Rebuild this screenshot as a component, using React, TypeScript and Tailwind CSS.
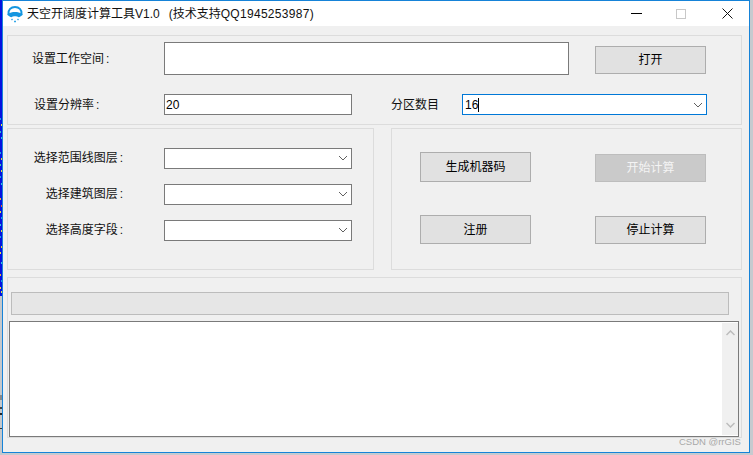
const font = "font-['Liberation_Sans','Noto_Sans_CJK_SC',sans-serif]";

// noisy screenshot edge of whatever sat behind the window
const noise = [
  [0, 118, "#19a0e8"], [1, 124, "#e8e040"], [0, 131, "#2bb8c8"], [1, 137, "#30c0e0"], [0, 152, "#19a0e8"],
  [1, 158, "#e8d030"], [0, 164, "#40c8a0"], [1, 170, "#e8e040"], [0, 176, "#19a0e8"], [1, 183, "#30c0e0"],
  [0, 198, "#e8b030"], [1, 205, "#e86030"], [0, 211, "#e8e040"], [1, 217, "#19a0e8"], [0, 224, "#30c0e0"],
  [1, 230, "#e8e040"], [0, 236, "#19a0e8"], [1, 246, "#e8c030"], [0, 252, "#e8e040"], [1, 262, "#30c0e0"],
  [0, 274, "#e8b030"], [1, 280, "#19a0e8"], [0, 287, "#e8e040"], [1, 291, "#e8e040"],
] as const;

function DesktopEdge() {
  return (
    <svg width="2" height="455" className="shrink-0">
      <rect width="2" height="296" fill="#0410e0" />
      <rect y="296" width="2" height="159" fill="#c4c8cc" />
      {noise.map(([x, y, c]) => (
        <rect key={y} x={x} y={y} width="1" height="2" fill={c} />
      ))}
      <rect y="395" width="2" height="5" fill="#8a8a8a" />
      <rect y="407" width="2" height="2" fill="#444" />
      <rect y="413" width="2" height="2" fill="#222" />
      <rect y="428" width="2" height="1" fill="#333" />
    </svg>
  );
}

function Logo() {
  return (
    <svg width="18" height="18" viewBox="0 0 18 18" fill="none" className="shrink-0">
      <path d="M2.500 9C2 4.800 5 2 9 2s7 2.800 6.500 7" stroke="#1496e0" strokeWidth="2" />
      <path d="M1 9.500C4 7.600 6.500 7 9 7s5 .6 8 2.500c-1.500 1.500-3 2.500-4.500 2.800C11 11 7 11 5.500 12.300 4 12 2.500 11 1 9.500z" fill="#1496e0" />
      <path d="M5.500 14l1 1M11.500 15l1-1M8 16.500h2" stroke="#35a8e8" strokeWidth="1.500" />
    </svg>
  );
}

function Chevron() {
  return (
    <svg width="10" height="6" viewBox="0 0 10 6" fill="none" className="shrink-0">
      <path d="M1 1l4 4 4-4" stroke="#606060" strokeWidth="1" />
    </svg>
  );
}

function TextBox({ className, value }: { className: string; value?: string }) {
  return (
    <div className={`flex items-center bg-white border border-[#7a7a7a] pl-[1px] text-[12px] text-black ${className}`}>
      {value}
    </div>
  );
}

function Combo({ focused, value }: { focused?: boolean; value?: string }) {
  return (
    <div
      className={`flex h-[21px] items-center justify-between bg-white border pl-[2px] pr-[3px] text-[12px] text-black ${
        focused ? "w-[245px] border-[#0078d7]" : "w-[188px] border-[#7a7a7a]"
      }`}
    >
      <span className="flex items-center">
        {value}
        {focused && <span className="h-[14px] w-[1px] bg-black" />}
      </span>
      <Chevron />
    </div>
  );
}

function Btn({ label, className, disabled }: { label: string; className: string; disabled?: boolean }) {
  return (
    <div
      className={`flex w-[111px] items-center justify-center border text-[12px] ${
        disabled
          ? "border-[#bdbdbd] bg-[#cacaca] text-[#f4f4f4]"
          : "border-[#adadad] bg-[#e1e1e1] text-black"
      } ${className}`}
    >
      {label}
    </div>
  );
}

function Caption({ text }: { text: string }) {
  return (
    <>
      {text}
      <span className="ml-[2px]">:</span>
    </>
  );
}

function LayerRow({ label }: { label: string }) {
  return (
    <div className="flex h-[20px] items-center">
      <div className="w-[115px] text-right text-[12px] text-[#111]">
        <Caption text={label} />
      </div>
      <div className="ml-[41px]">
        <Combo />
      </div>
    </div>
  );
}

export default function App() {
  return (
    <div className={`relative flex h-[455px] w-[753px] overflow-hidden bg-[#c6cacf] ${font}`}>
      <DesktopEdge />
      <div className="flex h-[453px] w-[748px] shrink-0 flex-col border border-[#1683d8] bg-[#f0f0f0]">
        {/* title bar */}
        <div className="flex h-[25px] shrink-0 items-center bg-white pl-[3px]">
          <Logo />
          <span className="ml-[3px] text-[12px] text-[#111]">天空开阔度计算工具V1.0</span>
          <span className="ml-[9px] text-[12px] text-[#111]">(技术支持<span className="tracking-[0.3px]">QQ1945253987)</span></span>
          <div className="ml-auto flex items-center pr-[16px]">
            <div className="h-[1px] w-[11px] bg-black" />
            <div className="ml-[34px] h-[10px] w-[10px] border border-[#c8c8c8]" />
            <svg width="11" height="11" viewBox="0 0 11 11" className="ml-[36px]">
              <path d="M.5.500l10 10M10.500.500l-10 10" stroke="#111" strokeWidth="1" />
            </svg>
          </div>
        </div>

        <div className="flex flex-col pl-[4px] pt-[9px]">
          {/* workspace group */}
          <div className="h-[90px] w-[735px] border border-[#dcdcdc]">
            <div className="mt-[6px] flex h-[33px]">
              <div className="flex w-[156px] items-center pl-[24px] text-[12px] text-[#111]">
                <Caption text="设置工作空间" />
              </div>
              <TextBox className="w-[405px]" />
              <Btn label="打开" className="ml-[26px] mt-[4px] h-[28px]" />
            </div>
            <div className="mt-[19px] flex h-[21px] items-center">
              <div className="w-[156px] pl-[26px] text-[12px] text-[#111]">
                <Caption text="设置分辨率" />
              </div>
              <TextBox className="h-[21px] w-[188px]" value="20" />
              <div className="ml-[39px] w-[71px] text-[12px] text-[#111]">分区数目</div>
              <Combo focused value="16" />
            </div>
          </div>

          <div className="mt-[3px] flex h-[142px] gap-[17px]">
            {/* layers */}
            <div className="flex w-[367px] flex-col gap-[16px] border border-[#dcdcdc] pt-[19px]">
              <LayerRow label="选择范围线图层" />
              <LayerRow label="选择建筑图层" />
              <LayerRow label="选择高度字段" />
            </div>
            {/* actions */}
            <div className="grid w-[351px] grid-cols-[111px_111px] content-start items-end gap-x-[64px] gap-y-[33px] border border-[#dcdcdc] pl-[28px] pt-[23px]">
              <Btn label="生成机器码" className="h-[30px]" />
              <Btn label="开始计算" className="h-[28px]" disabled />
              <Btn label="注册" className="h-[29px]" />
              <Btn label="停止计算" className="h-[28px]" />
            </div>
          </div>

          {/* progress and log */}
          <div className="mt-[7px] h-[161px] w-[735px] border border-[#dcdcdc]">
            <div className="ml-[3px] mt-[14px] h-[23px] w-[718px] border border-[#bcbcbc] bg-[#e6e6e6]" />
            <div className="ml-[1px] mt-[6px] flex h-[116px] w-[730px] justify-end border border-[#7a7a7a] bg-white">
              <div className="my-[1px] flex w-[16px] flex-col items-center justify-between bg-[#f0f0f0] py-[7px]">
                <svg width="9" height="6" viewBox="0 0 9 6" fill="none">
                  <path d="M.5 5l4-4 4 4" stroke="#bcbcbc" strokeWidth="1.500" />
                </svg>
                <svg width="9" height="6" viewBox="0 0 9 6" fill="none">
                  <path d="M.5 1l4 4 4-4" stroke="#bcbcbc" strokeWidth="1.500" />
                </svg>
              </div>
            </div>
          </div>
        </div>
      </div>
      {/* watermark */}
      <div className="absolute left-[679px] top-[435px] text-[9.500px] leading-[13px] text-[#a8a8a8]">CSDN @rrGIS</div>
    </div>
  );
}
